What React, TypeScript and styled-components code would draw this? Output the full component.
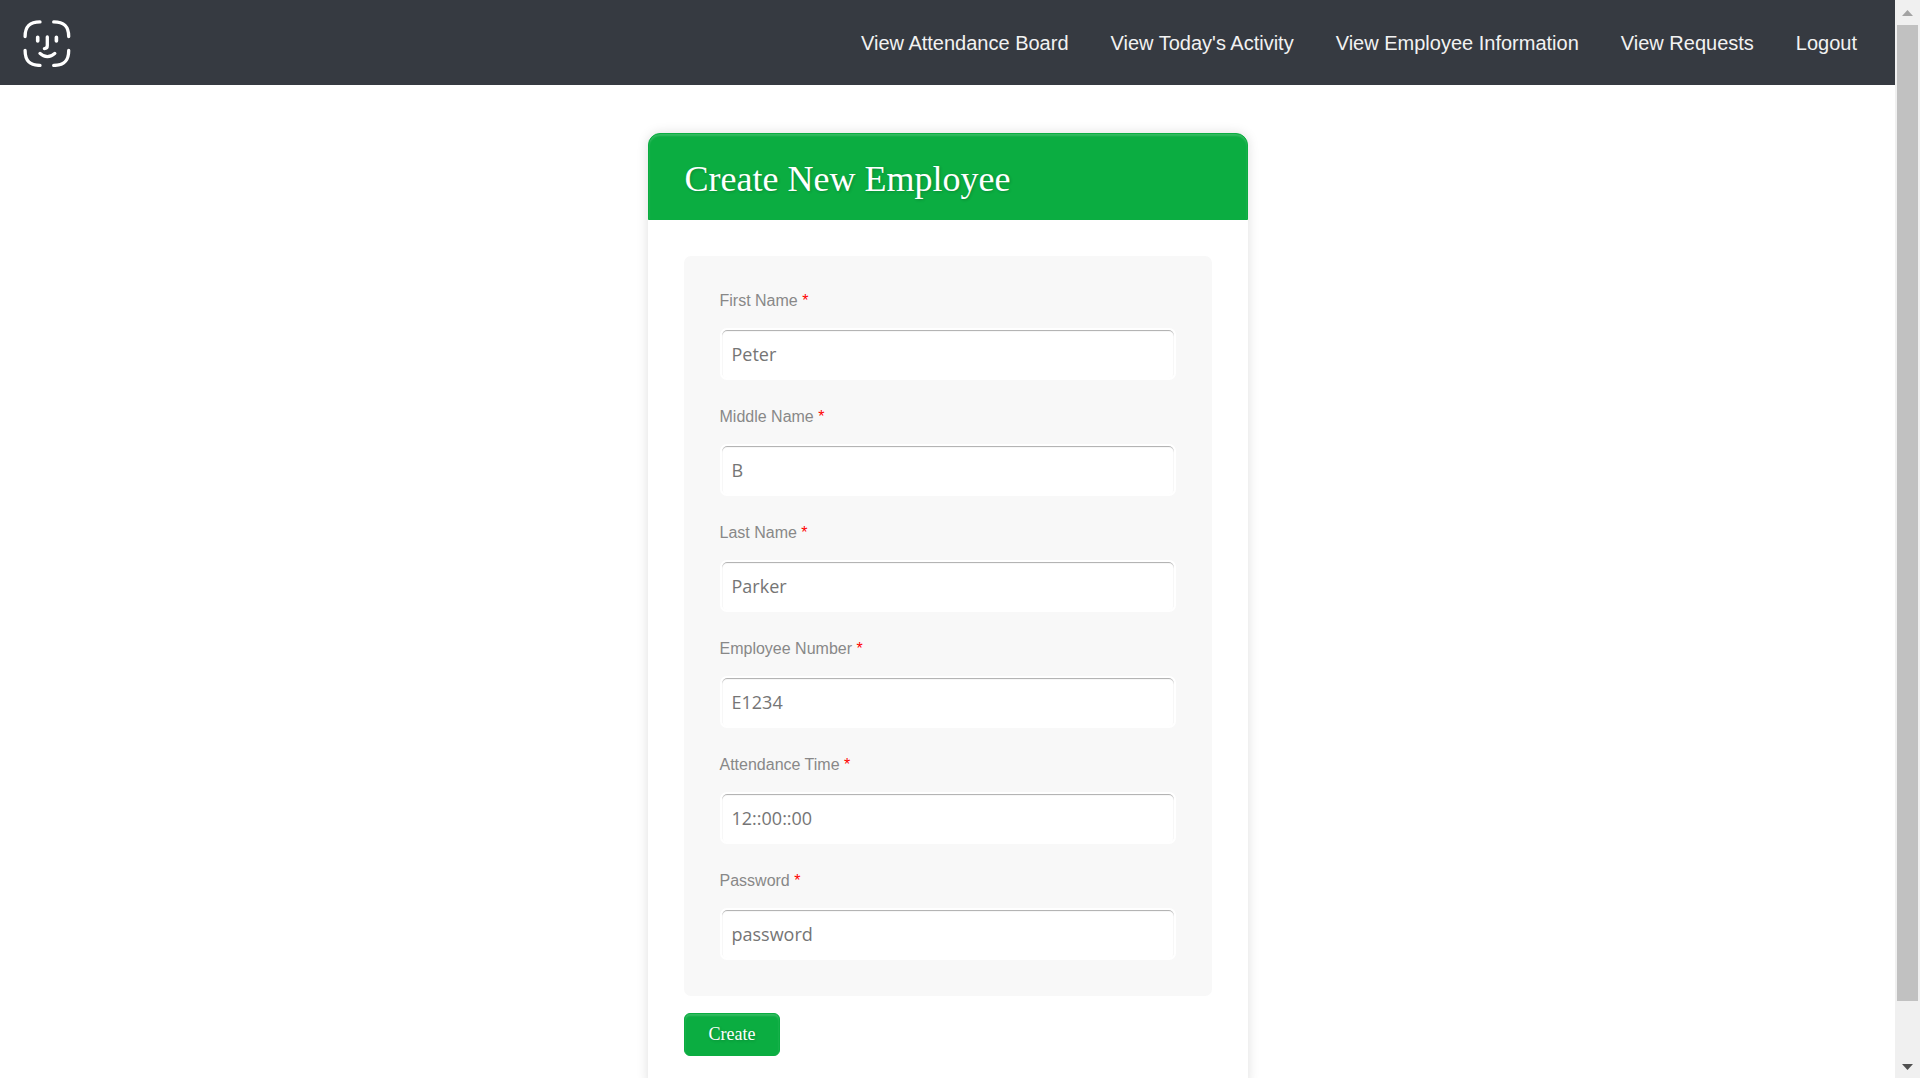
import React, { useEffect, useRef, useState } from 'react';
import styled, { createGlobalStyle } from 'styled-components';

const sans = '"Liberation Sans", Arial, sans-serif';
const serif = '"Liberation Serif", "Times New Roman", serif';
const green = '#0bad41';

const GlobalStyle = createGlobalStyle`
  *, *::before, *::after { box-sizing: border-box; }
  body { margin: 0; background: #fff; font-family: ${serif}; }
`;

const Shell = styled.div`
  display: flex;
  height: 100vh;
`;

const Pane = styled.div`
  flex: 1;
  min-width: 0;
  overflow-y: auto;
  scrollbar-width: none;
`;

const Header = styled.header`
  display: flex;
  align-items: center;
  justify-content: space-between;
  height: 85px;
  padding: 0 38px 0 23px;
  background: #363a41;
`;

const HomeLink = styled.a`
  display: block;
  height: 48px;
`;

const Nav = styled.nav`
  display: flex;
  gap: 42px;
`;

const NavLink = styled.a`
  color: #f2f2f2;
  font: 20px/24px ${sans};
  text-decoration: none;
`;

const Main = styled.main`
  padding: 48px 24px 44px;
`;

const Card = styled.section`
  max-width: 600px;
  margin: 0 auto;
  background: #fff;
  border-radius: 12px;
  box-shadow: 0 0 12px rgba(0, 0, 0, 0.13);
`;

const Title = styled.h1`
  margin: 0;
  padding: 26px 36px 20px;
  border: 1px solid ${green};
  border-radius: 12px 12px 0 0;
  background: ${green};
  box-shadow: inset 0 2px 2px rgba(255, 255, 255, 0.17);
  color: #fff;
  font: normal 36px/39px ${serif};
  text-shadow: 1px 1px 3px rgba(0, 0, 0, 0.2);
`;

const Form = styled.form`
  padding: 36px;
`;

const Fields = styled.div`
  display: flex;
  flex-direction: column;
  gap: 28px;
  margin-bottom: 17px;
  padding: 36px;
  border-radius: 7px;
  background: #f8f8f8;
`;

const Label = styled.label`
  display: block;
  color: #888;
  font: 16px/18px ${sans};
`;

const Required = styled.span`
  color: #f00;
`;

const TextInput = styled.input`
  display: block;
  width: 100%;
  height: 52px;
  margin-top: 18px;
  padding: 0 10px;
  border: 2px solid #fff;
  border-radius: 7px;
  background: #fff;
  box-shadow: inset 0 1px 1px rgba(0, 0, 0, 0.33);
  color: #333;
  font: 18px "Open Sans", "Noto Sans", sans-serif;
  outline: none;

  &::placeholder { color: #757575; opacity: 1; }
`;

const SubmitButton = styled.button`
  display: block;
  padding: 10px 24px;
  border: 1px solid ${green};
  border-radius: 6px;
  background: ${green};
  box-shadow: inset 0 2px 2px rgba(255, 255, 255, 0.17);
  color: #fff;
  font: 18px/21px ${serif};
  text-shadow: 1px 1px 3px rgba(0, 0, 0, 0.2);
  cursor: pointer;
`;

const ScrollRail = styled.div`
  display: flex;
  flex-direction: column;
  width: 25px;
  padding: 0 2px;
  background: #f0f0f0;
`;

const ScrollArrow = styled.svg`
  display: block;
  flex: none;
  width: 21px;
  height: 25px;
`;

const ScrollTrack = styled.div`
  flex: 1;
`;

const ScrollThumb = styled.div`
  background: #c1c1c1;
`;

const FaceLogo = () => (
  <svg width="48" height="48" viewBox="0 0 48 48" fill="none" stroke="#fff" strokeWidth="3.3" strokeLinecap="round">
    <path d="M2.1 17.5C2.1 7 7 2.9 17 2.9M30.7 2.9C41 2.9 45.7 7 45.7 17.5M45.7 31.5C45.7 42 41 46.4 30.7 46.4M17 46.4C7 46.4 2.1 42 2.1 31.500" />
    <path d="M14.700 18.200v3.700M33.400 18.200v3.700" strokeWidth="3.6" />
    <path d="M24.300 18v8.600c0 2-.9 3-2.900 3" />
    <path d="M17 34.400c4.300 4.300 10.500 4.300 14.800 0" />
  </svg>
);

const links = [
  'View Attendance Board',
  "View Today's Activity",
  'View Employee Information',
  'View Requests',
  'Logout',
];

const fields = [
  { id: 'first-name', label: 'First Name', placeholder: 'Peter' },
  { id: 'middle-name', label: 'Middle Name', placeholder: 'B' },
  { id: 'last-name', label: 'Last Name', placeholder: 'Parker' },
  { id: 'employee-number', label: 'Employee Number', placeholder: 'E1234' },
  { id: 'attendance-time', label: 'Attendance Time', placeholder: '12::00::00' },
  { id: 'password', label: 'Password', placeholder: 'password' },
];

export default function App() {
  const pane = useRef<HTMLDivElement>(null);
  const track = useRef<HTMLDivElement>(null);
  const [thumb, setThumb] = useState({ size: 0, start: 0 });

  const measure = () => {
    if (!pane.current || !track.current) return;
    const { clientHeight, scrollHeight, scrollTop } = pane.current;
    const scale = track.current.clientHeight / scrollHeight;
    setThumb({ size: clientHeight * scale, start: scrollTop * scale });
  };

  useEffect(() => {
    measure();
    window.addEventListener('resize', measure);
    return () => window.removeEventListener('resize', measure);
  }, []);

  return (
    <Shell>
      <GlobalStyle />
      <Pane ref={pane} onScroll={measure}>
        <Header>
          <HomeLink href="#" aria-label="Home">
            <FaceLogo />
          </HomeLink>
          <Nav>
            {links.map((text) => (
              <NavLink key={text} href="#">{text}</NavLink>
            ))}
          </Nav>
        </Header>
        <Main>
          <Card>
            <Title>Create New Employee</Title>
            <Form onSubmit={(event) => event.preventDefault()}>
              <Fields>
                {fields.map(({ id, label, placeholder }) => (
                  <div key={id}>
                    <Label htmlFor={id}>
                      {label} <Required>*</Required>
                    </Label>
                    <TextInput id={id} name={id} type="text" placeholder={placeholder} />
                  </div>
                ))}
              </Fields>
              <SubmitButton type="submit">Create</SubmitButton>
            </Form>
          </Card>
        </Main>
      </Pane>
      <ScrollRail aria-hidden="true">
        <ScrollArrow viewBox="0 0 21 25">
          <path d="M5 16L10.500 10L16 16z" fill="#a3a3a3" />
        </ScrollArrow>
        <ScrollTrack ref={track}>
          <ScrollThumb style={{ height: thumb.size, transform: `translateY(${thumb.start}px)` }} />
        </ScrollTrack>
        <ScrollArrow viewBox="0 0 21 25">
          <path d="M5 11L10.500 17L16 11z" fill="#505050" />
        </ScrollArrow>
      </ScrollRail>
    </Shell>
  );
}
